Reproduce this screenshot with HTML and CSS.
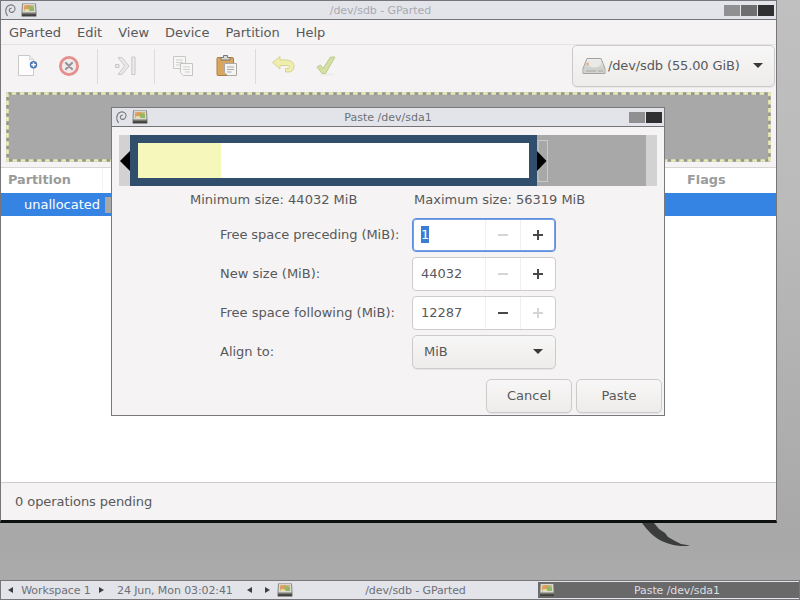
FILE: index.html
```
<!DOCTYPE html>
<html lang="en">
<head>
    <meta charset="utf-8">
    <title>/dev/sdb - GParted</title>
    <link rel="stylesheet" href="styles.css">
</head>
<body>

<!-- shared icons -->
<svg class="defs" width="0" height="0">
    <linearGradient id="metal" x1="0" y1="0" x2="0" y2="1">
        <stop offset="0" stop-color="#f2f2f0"/>
        <stop offset="1" stop-color="#bdbdba"/>
    </linearGradient>
    <symbol id="swirl" viewBox="0 0 12 14">
        <path d="M2.800 12.800C-.3 9 .3 3 4.500 1.300C8-.1 11.400 2.200 10.900 5.600C10.500 8.800 6.800 10 5.300 8.200C4 6.500 5 4.200 7.400 4.500" fill="none" stroke="#77777c" stroke-width="1.200"/>
    </symbol>
    <symbol id="app" viewBox="0 0 16 14">
        <path d="M1 .5h14l.5 9.500v3.500H.5V10z" fill="#77776f"/>
        <path d="M1.800 1h12.400l.4 8.500H1.400z" fill="#d9d9d2"/>
        <path d="M3 2h10v6H3z" fill="#c9bb82"/>
        <path d="M3 4l3-2h3v3l-3 1H3z" fill="#e79a5d"/>
        <path d="M7 4l4-1 2 2v3H9z" fill="#93b765"/>
        <path d="M4 6.500h4V8H4z" fill="#ece7a6"/>
        <path d="M1 11.200h14v2H1z" fill="#41413f"/>
    </symbol>
</svg>

<svg class="wallpaper" viewBox="0 0 60 30" width="60" height="30">
    <path d="M0 2h12l5 6 6 4 3 4 7 4 6 3 9 1.500C38 26.500 24 23 16 18Q8 13 0 2z" fill="#3b3d3c"/>
</svg>

<div class="window main-window">
    <div class="titlebar inactive">
        <svg class="swirl"><use href="#swirl"/></svg>
        <svg class="app-icon"><use href="#app"/></svg>
        <span class="title">/dev/sdb - GParted</span>
        <div class="controls"><i class="light"></i><i class="mid"></i><i class="dark"></i></div>
    </div>

    <div class="menubar">
        <span>GParted</span><span>Edit</span><span>View</span><span>Device</span><span>Partition</span><span>Help</span>
    </div>

    <div class="toolbar">
        <svg class="tool" viewBox="0 0 24 24">
            <path d="M3.500 1.500h11l4 4v16h-15z" fill="#fdfdfd" stroke="#c9c9c6"/>
            <path d="M14.500 1.500v4h4" fill="#eee" stroke="#c9c9c6" stroke-width=".7"/>
            <circle cx="18.500" cy="10.800" r="3.700" fill="#4b78b4"/>
            <path d="M16.300 10.800h4.400M18.500 8.600V13" stroke="#fff" stroke-width="1.500"/>
        </svg>
        <svg class="tool second" viewBox="0 0 24 24">
            <circle cx="12" cy="12" r="8.600" fill="#f1eaea" stroke="#e58f8c" stroke-width="2.800"/>
            <path d="M9 9l6 6M15 9l-6 6" stroke="#96969a" stroke-width="2.200" stroke-linecap="round"/>
        </svg>
        <div class="separator"></div>
        <svg class="tool" viewBox="0 0 24 24">
            <path d="M4 3.500h4l7 8.500-7 8.500H4L10.500 12z" fill="#e8e8e6" stroke="#cbcbc9"/>
            <path d="M1.500 10.500H5v3H1.500zM17.800 3H21v17.500h-3.200z" fill="#ebebe9" stroke="#c8c8c6"/>
        </svg>
        <div class="separator"></div>
        <svg class="tool" viewBox="0 0 24 24">
            <path d="M2.500 2.500h12v12h-12z" fill="#f6f6f4" stroke="#c9c9c7"/>
            <path d="M5 6h7M5 8.500h7M5 11h5" stroke="#cfcfcd"/>
            <path d="M9.500 9.500h12v12h-9l-3-3z" fill="#f6f6f4" stroke="#c4c4c2"/>
            <path d="M12 13h7M12 15.500h7M14 18h5" stroke="#cfcfcd"/>
        </svg>
        <svg class="tool paste" viewBox="0 0 24 24">
            <rect x="2" y="3.500" width="16.500" height="18" rx="1" fill="#d9a660" stroke="#a98043"/>
            <path d="M6 6V3.500h2.500V1.500h4v2H15V6z" fill="#d8d8d5" stroke="#777773"/>
            <path d="M9.500 9.500h12v12h-9l-3-3z" fill="#f4f4f2" stroke="#aaa9a5"/>
            <path d="M12 13h7M12 15.500h7M12 18h4.500" stroke="#aaa9a7"/>
        </svg>
        <div class="separator"></div>
        <svg class="tool" viewBox="0 0 24 24">
            <path d="M.5 8.500L8 2.500V6h6c5 0 8.500 3 8 7-.3 3-2.500 5-5 5h-3.500v-3.500H16c2 0 2.500-3-1-3H8V15z" fill="#efeeae" stroke="#d6d38e"/>
        </svg>
        <svg class="tool apply" viewBox="0 0 24 24">
            <ellipse cx="13" cy="20.500" rx="8" ry="1.500" fill="#eeeeec"/>
            <path d="M3 13l3.500-2L9 14.500 16.500 3H21l-9.500 16.500H8z" fill="#d3e0a2" stroke="#bccb90"/>
        </svg>
        <div class="button device">
            <svg class="disk" viewBox="0 0 24 18">
                <path d="M5 1.500h14l4 10v5H1v-5z" fill="url(#metal)" stroke="#a2a29e"/>
                <path d="M1.500 12h21v4h-21z" fill="#d2d2cf"/>
                <ellipse cx="12.500" cy="6.500" rx="6" ry="4" fill="#e9e9e7"/>
                <path d="M4 14h10M16 14h5" stroke="#a5a5a1" stroke-width="1"/>
                <circle cx="5.600" cy="7" r="1.200" fill="#efa75a"/>
            </svg>
            <span>/dev/sdb (55.00 GiB)</span>
            <b class="arrow-down"></b>
        </div>
    </div>

    <div class="visual">
        <svg width="765" height="70">
            <rect x="1.500" y="1.500" width="762" height="67" fill="#a8a8a8" stroke="#95968c" stroke-width="2.600"/>
            <rect x="1.500" y="1.500" width="762" height="67" fill="none" stroke="#ebedb8" stroke-width="2.600" stroke-dasharray="4.600 3.530" stroke-dashoffset="4"/>
        </svg>
    </div>

    <div class="list">
        <div class="list-head"><span class="col">Partition</span><span class="flags">Flags</span></div>
        <div class="list-row"><span>unallocated</span><i class="swatch"></i></div>
    </div>

    <div class="statusbar">0 operations pending</div>
</div>

<div class="window dialog">
    <div class="titlebar">
        <svg class="swirl"><use href="#swirl"/></svg>
        <svg class="app-icon"><use href="#app"/></svg>
        <span class="title">Paste /dev/sda1</span>
        <div class="controls"><i class="light"></i><i class="dark"></i></div>
    </div>

    <div class="resizer">
        <div class="edge left"><svg width="10" height="20"><path d="M10 0v20L0 10z"/></svg></div>
        <div class="partition"><div class="used"></div></div>
        <div class="free"><svg width="11" height="42">
            <rect x="1" y=".5" width="9.500" height="41" fill="none" stroke="#c9c9c9"/>
            <path d="M0 11v20l9.500-10z"/>
        </svg></div>
        <div class="edge"></div>
    </div>

    <div class="sizes">
        <span class="min">Minimum size: 44032 MiB</span>
        <span class="max">Maximum size: 56319 MiB</span>
    </div>

    <div class="form">
        <label>Free space preceding (MiB):</label>
        <div class="spin focus"><span class="value"><mark>1</mark></span><span class="step minus off"></span><span class="step plus"></span></div>
        <label>New size (MiB):</label>
        <div class="spin"><span class="value">44032</span><span class="step minus off"></span><span class="step plus"></span></div>
        <label>Free space following (MiB):</label>
        <div class="spin"><span class="value">12287</span><span class="step minus"></span><span class="step plus off"></span></div>
        <label>Align to:</label>
        <div class="button combo"><span>MiB</span><b class="arrow-down"></b></div>
    </div>

    <div class="actions">
        <div class="button">Cancel</div>
        <div class="button">Paste</div>
    </div>
</div>

<div class="taskbar">
    <div class="workspace"><b class="tri-left"></b><span>Workspace 1</span><b class="tri-right"></b></div>
    <span class="clock">24 Jun, Mon 03:02:41</span>
    <div class="nav"><b class="tri-left"></b><b class="tri-right"></b></div>
    <div class="task"><svg class="app-icon"><use href="#app"/></svg><span>/dev/sdb - GParted</span></div>
    <div class="task active"><svg class="app-icon"><use href="#app"/></svg><span>Paste /dev/sda1</span></div>
</div>

</body>
</html>
```
FILE: styles.css
```
* {
    box-sizing: border-box;
}

body {
    width: 800px;
    height: 600px;
    margin: 0;
    overflow: hidden;
    position: relative;
    font-family: "DejaVu Sans", sans-serif;
    font-size: 13px;
    color: #58595a;
    white-space: nowrap;
    background: linear-gradient(#c0c0c0, #bababa 35%, #adadad 75%, #a8a8a8 90%, #acacac);
}

svg {
    display: block;
    flex: none;
}

.defs {
    position: absolute;
}

.wallpaper {
    position: absolute;
    left: 642px;
    top: 521px;
}

/* windows */
.window {
    position: absolute;
    display: flex;
    flex-direction: column;
    background: #f5f3f4;
}

.main-window {
    left: 0;
    top: 0;
    width: 777px;
    height: 523px;
    border: 1px solid #76767a;
    border-bottom: 3px solid #0e1112;
}

.dialog {
    left: 111px;
    top: 107px;
    width: 554px;
    height: 309px;
    border: 1px solid #77797c;
}

.titlebar {
    display: grid;
    grid-template-columns: 18px 1fr auto 1fr;
    align-items: center;
    height: 19px;
    flex: none;
    padding: 0 2px 0 4px;
    background: #e3e4ea;
    border-bottom: 1px solid #737378;
    font-size: 11px;
    color: #6d7075;
}

.titlebar.inactive {
    color: #a8aab0;
}

.swirl {
    width: 11px;
    height: 13px;
}

.app-icon {
    width: 16px;
    height: 14px;
    flex: none;
}

.titlebar .app-icon {
    margin-left: -2px;
}

.titlebar .title {
    margin: 0 10px 0 -10px;
}

.titlebar.inactive .title {
    margin: 0 18px 0 -18px;
    letter-spacing: -0.05px;
}

.controls {
    display: flex;
    gap: 1px;
    justify-self: end;
}

.controls i {
    width: 16px;
    height: 11px;
}

.light { background: #909092; }
.mid { background: #6e6e70; }
.dark { background: #303032; }

/* main window */
.menubar {
    display: flex;
    gap: 16px;
    height: 25px;
    flex: none;
    padding: 0 8px;
    line-height: 25px;
    border-bottom: 1px solid #e4e2e2;
}

.toolbar {
    display: flex;
    align-items: center;
    height: 42px;
    flex: none;
    padding-left: 14px;
}

.tool {
    width: 24px;
    height: 24px;
}

.tool.second { margin-left: 18px; }
.tool.paste { margin-left: 20px; }
.tool.apply { margin-left: 18px; }

.separator {
    width: 1px;
    height: 35px;
    margin: 0 16px 0 16px;
    background: #dddbdb;
}

.button {
    display: flex;
    align-items: center;
    justify-content: center;
    height: 34px;
    padding-bottom: 1px;
    border: 1px solid #cdcbca;
    border-radius: 5px;
    background: linear-gradient(#f8f7f7, #edecea);
    box-shadow: 0 1px 1px rgba(0, 0, 0, 0.06);
}

.button.device {
    justify-content: flex-start;
    width: 203px;
    height: 42px;
    margin-left: auto;
    margin-right: 1px;
    padding: 0 11px 1px 9px;
    letter-spacing: -0.13px;
}

.disk {
    width: 24px;
    height: 18px;
    margin-right: 2px;
}

.arrow-down {
    margin-left: auto;
    border: 5px solid transparent;
    border-top-color: #38393a;
    border-bottom: 0;
}

.visual {
    height: 81px;
    flex: none;
    padding: 5px 5px 0;
    border-bottom: 1px solid #d8d6d5;
}

.list {
    flex: 1;
    background: #fff;
}

.list-head {
    display: flex;
    height: 25px;
    padding-left: 7px;
    line-height: 24px;
    font-weight: bold;
    font-size: 12.800px;
    color: #9a9b9b;
}

.list-head .col {
    width: 95px;
    height: 23px;
    border-right: 1px solid #f3f2f2;
}

.flags {
    margin-left: 584px;
}

.list-row {
    display: flex;
    align-items: center;
    height: 23px;
    padding-left: 23px;
    background: #3584e4;
    color: #fff;
}

.swatch {
    width: 16px;
    height: 16px;
    margin-left: 5px;
    background: #a8a8a8;
}

.statusbar {
    height: 38px;
    flex: none;
    padding-left: 14px;
    line-height: 37px;
    letter-spacing: -0.07px;
    border-top: 1px solid #cfcdcc;
}

/* dialog */
.resizer {
    display: flex;
    align-items: center;
    width: 538px;
    height: 51px;
    flex: none;
    margin: 8px 0 0 7px;
}

.resizer > div {
    height: 51px;
}

.edge {
    display: flex;
    align-items: center;
    width: 11px;
    background: #d2d2d2;
}

.edge.left {
    padding-left: 1px;
}

.partition {
    width: 407px;
    border: 8px solid #314e6c;
    background: #fff;
}

.used {
    width: 83px;
    height: 100%;
    background: #f6f7bb;
}

.free {
    display: flex;
    align-items: center;
    width: 109px;
    background: #a8a8a8;
}

.sizes {
    display: grid;
    grid-template-columns: 224px auto;
    height: 28px;
    flex: none;
    padding-left: 78px;
    line-height: 28px;
}

.form {
    display: grid;
    grid-template-columns: 192px 144px;
    grid-auto-rows: 34px;
    row-gap: 5px;
    align-items: center;
    margin: 4px 0 0 108px;
}

.form label {
    padding-bottom: 2px;
}

.form label:first-child {
    letter-spacing: -0.07px;
}

.spin {
    display: flex;
    height: 34px;
    border: 1px solid #cfcdcc;
    border-radius: 4px;
    background: #fff;
}

.spin.focus {
    border-color: #5d8fdf;
    box-shadow: inset 0 0 0 1px #78a1e3;
}

.value {
    width: 72px;
    padding-left: 8px;
    line-height: 31px;
}

.value mark {
    display: inline-block;
    height: 17px;
    line-height: 17px;
    background: #3a7dd3;
    color: #fff;
}

.step {
    display: grid;
    place-items: center;
    width: 35px;
    height: 32px;
    border-left: 1px solid #f0efef;
    color: #47484a;
}

.step.off {
    color: #d5d5d5;
}

.step::before,
.plus::after {
    content: "";
    grid-area: 1 / 1;
    width: 10px;
    height: 2px;
    background: currentColor;
}

.plus::after {
    width: 2px;
    height: 10px;
}

.spin.focus .step {
    height: 30px;
    margin-top: 1px;
}

.combo {
    justify-content: flex-start;
    padding: 0 12px 1px 11px;
}

.actions {
    display: flex;
    justify-content: flex-end;
    gap: 4px;
    margin-top: 10px;
    padding-right: 2px;
}

.actions .button {
    width: 86px;
    padding-bottom: 2px;
}

/* taskbar */
.taskbar {
    position: absolute;
    left: 0;
    bottom: 0;
    display: flex;
    align-items: center;
    width: 800px;
    height: 20px;
    padding-left: 7px;
    background: #e3e4ea;
    border: 1px solid #77777a;
    font-size: 11px;
    letter-spacing: -0.1px;
    color: #6d7075;
}

.workspace {
    display: flex;
    align-items: center;
    justify-content: space-between;
    width: 96px;
}

.clock {
    margin-left: 13px;
    width: 130px;
}

.nav {
    display: flex;
    justify-content: space-between;
    width: 23px;
}

.tri-left,
.tri-right {
    border: 3px solid transparent;
    border-right: 5px solid #3e3f42;
    border-left: 0;
}

.tri-right {
    border-left: 5px solid #3e3f42;
    border-right: 0;
}

.task {
    display: flex;
    align-items: center;
    width: 268px;
    height: 18px;
    padding-left: 7px;
}

.task span {
    flex: 1;
    text-align: center;
}

.task.active {
    flex: 1;
    height: 16px;
    padding-left: 1px;
    background: #69696a;
    color: #dddee0;
}
```
